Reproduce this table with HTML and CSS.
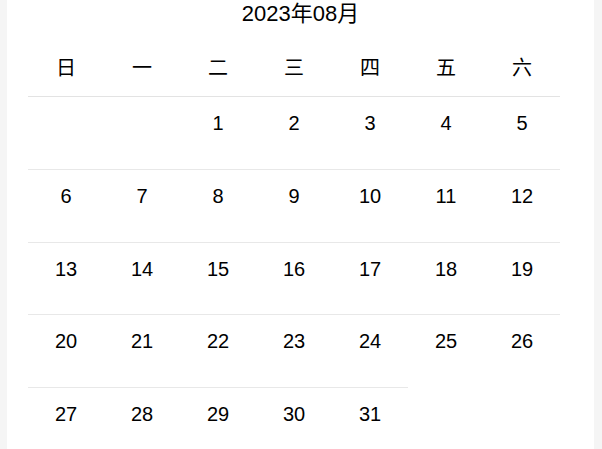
FILE: index.html
```html
<!DOCTYPE html>
<html lang="zh">
<head>
<meta charset="utf-8">
<link rel="stylesheet" href="styles.css">
</head>
<body>
<div class="page">
  <div class="title">2023年08月</div>
  <div class="cal">
    <div class="wd">日</div><div class="wd">一</div><div class="wd">二</div><div class="wd">三</div><div class="wd">四</div><div class="wd">五</div><div class="wd">六</div>
    <div class="day first"></div><div class="day first"></div><div class="day first">1</div><div class="day first">2</div><div class="day first">3</div><div class="day first">4</div><div class="day first">5</div>
    <div class="day">6</div><div class="day">7</div><div class="day">8</div><div class="day">9</div><div class="day">10</div><div class="day">11</div><div class="day">12</div>
    <div class="day">13</div><div class="day">14</div><div class="day">15</div><div class="day">16</div><div class="day">17</div><div class="day">18</div><div class="day">19</div>
    <div class="day">20</div><div class="day">21</div><div class="day">22</div><div class="day">23</div><div class="day">24</div><div class="day">25</div><div class="day">26</div>
    <div class="day">27</div><div class="day">28</div><div class="day">29</div><div class="day">30</div><div class="day">31</div>
  </div>
</div>
</body>
</html>
```
FILE: styles.css
```css
html, body {
  margin: 0;
  padding: 0;
  background: #f5f5f5;
  height: 100%;
}
body {
  font-family: "Liberation Sans", "Noto Sans CJK SC", sans-serif;
  color: #000;
}
.page {
  margin: 0 8px 0 7px;
  background: #fff;
  min-height: 100%;
  overflow: hidden;
}
.title {
  text-align: center;
  font-size: 22px;
  line-height: 28px;
  height: 37px;
}
.cal {
  margin-left: 21px;
  display: grid;
  grid-template-columns: repeat(7, 76px);
}
.wd {
  height: 59px;
  border-bottom: 1px solid #e3e3e3;
  display: flex;
  align-items: center;
  justify-content: center;
  font-size: 20px;
}
.day {
  box-sizing: border-box;
  height: 72.6px;
  border-top: 1px solid #e8e8e8;
  text-align: center;
  font-size: 20px;
  line-height: 28px;
  padding-top: 12px;
}
.day.first {
  border-top: none;
  height: 72px;
}
```
